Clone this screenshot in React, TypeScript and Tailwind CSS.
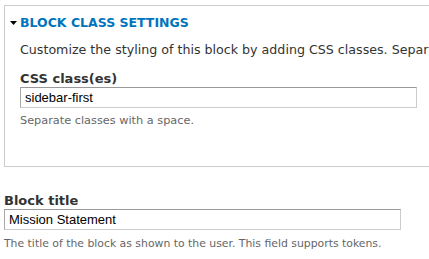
export default function App() {
  return (
    <div className="w-[429px] h-[259px] overflow-hidden bg-white text-[#333] font-['DejaVu_Sans',Verdana,sans-serif]">
      {/* Fieldset */}
      <div className="ml-[4px] mt-[5px] w-[440px] h-[162px] border border-[#ccc] pl-[15px]">
        <div className="flex items-center h-[22px] mt-[6px] -ml-[10px]">
          <svg width="8" height="6" viewBox="0 0 8 6" className="mr-[2px] -mt-[1px]">
            <path d="M0 1 L7 1 L3.5 5 Z" fill="#000" />
          </svg>
          <span className="text-[12.5px] font-bold text-[#0074bd] uppercase">Block class settings</span>
        </div>
        <p className="mt-[7px] text-[12.65px] leading-[18px] whitespace-nowrap">
          Customize the styling of this block by adding CSS classes. Separate multiple classes with spaces.
        </p>
        <label className="block mt-[12px] text-[13px] font-bold leading-[16px]">CSS class(es)</label>
        <div className="mt-[0px] w-[397px] h-[21px] border border-[#ccc] border-t-[#999] border-l-[#aaa] flex items-center pl-[4px] font-['Liberation_Sans',Arial,sans-serif] text-[13px] text-[#000]">
          sidebar-first
        </div>
        <p className="mt-[6px] text-[11.3px] leading-[14px] text-[#666]">Separate classes with a space.</p>
      </div>

      {/* Block title */}
      <div className="ml-[4px] mt-[26px]">
        <label className="block text-[13px] font-bold leading-[16px]">Block title</label>
        <div className="mt-[0px] w-[397px] h-[21px] border border-[#ccc] border-t-[#999] border-l-[#aaa] flex items-center pl-[4px] font-['Liberation_Sans',Arial,sans-serif] text-[13px] text-[#000]">
          Mission Statement
        </div>
        <p className="mt-[7px] text-[10.85px] leading-[14px] text-[#666] whitespace-nowrap">
          The title of the block as shown to the user. This field supports tokens.
        </p>
      </div>
    </div>
  );
}
